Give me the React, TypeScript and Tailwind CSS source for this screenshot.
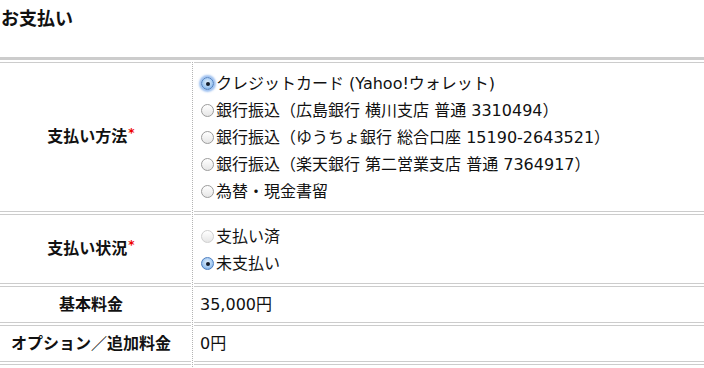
import React from "react"

type Option = { label: string; checked?: boolean; focused?: boolean; disabled?: boolean }

const methods: Option[] = [
  { label: "クレジットカード (Yahoo!ウォレット)", checked: true, focused: true },
  { label: "銀行振込（広島銀行 横川支店 普通 3310494）" },
  { label: "銀行振込（ゆうちょ銀行 総合口座 15190-2643521）" },
  { label: "銀行振込（楽天銀行 第二営業支店 普通 7364917）" },
  { label: "為替・現金書留" },
]

const statuses: Option[] = [
  { label: "支払い済", disabled: true },
  { label: "未支払い", checked: true },
]

function Radio({ checked, focused, disabled }: Option) {
  if (checked) {
    return (
      <span
        className={`ml-[1px] mr-[2px] flex h-[13px] w-[13px] shrink-0 items-center justify-center rounded-full border border-[#4f7fc0] bg-[radial-gradient(circle_at_50%_40%,#e4f0fc_0%,#a6cbf2_55%,#5f9ade_100%)] ${
          focused ? "shadow-[0_0_2px_2px_rgba(92,150,230,0.6)]" : ""
        }`}
      >
        <span className="h-[4px] w-[4px] rounded-full bg-[#141c2c]" />
      </span>
    )
  }
  return (
    <span
      className={`ml-[1px] mr-[2px] h-[13px] w-[13px] shrink-0 rounded-full border bg-gradient-to-b from-white to-[#e6e6e6] ${
        disabled ? "border-[#cfcfcf]" : "border-[#9c9c9c]"
      }`}
    />
  )
}

function Label({ text, required }: { text: string; required?: boolean }) {
  return (
    <div className="flex items-center justify-center border-y border-[#cccccc] pr-[9px] font-bold">
      <span>
        {text}
        {required && <span className="relative -top-[5px] ml-[1px] text-[12px] text-[#ee0000]">*</span>}
      </span>
    </div>
  )
}

function Options({ items, className }: { items: Option[]; className: string }) {
  return (
    <div className={`col-start-3 border-y border-[#cccccc] pl-[6px] ${className}`}>
      {items.map((o) => (
        <label key={o.label} className="flex h-[27px] items-center">
          <Radio {...o} />
          <span>{o.label}</span>
        </label>
      ))}
    </div>
  )
}

export default function App() {
  return (
    <div className="w-[704px] bg-white text-[16px] text-[#111] font-['DejaVu_Sans','Noto_Sans_CJK_JP',sans-serif]">
      <div className="h-[60px] border-b-[3px] border-[#cccccc] pl-[1px] pt-[7px]">
        <h2 className="text-[18px] font-bold leading-[24px]">お支払い</h2>
      </div>

      <div className="mt-[2px] grid grid-cols-[191px_3px_1fr] grid-rows-[150px_70px_37px_37px_37px] gap-y-[2px]">
        <div className="col-start-2 row-start-1 row-end-[-1] flex justify-center">
          <div className="h-full border-l border-dotted border-[#b4b4b4]" />
        </div>

        <div className="col-start-1 row-start-1 grid">
          <Label text="支払い方法" required />
        </div>
        <Options items={methods} className="row-start-1 pt-[7px] pb-[6px]" />

        <div className="col-start-1 row-start-2 grid">
          <Label text="支払い状況" required />
        </div>
        <Options items={statuses} className="row-start-2 pt-[8px] pb-[6px]" />

        <div className="col-start-1 row-start-3 grid">
          <Label text="基本料金" />
        </div>
        <div className="col-start-3 row-start-3 flex items-center border-y border-[#cccccc] pl-[6px]">35,000円</div>

        <div className="col-start-1 row-start-4 grid">
          <Label text="オプション／追加料金" />
        </div>
        <div className="col-start-3 row-start-4 flex items-center border-y border-[#cccccc] pl-[6px]">0円</div>

        <div className="col-start-1 row-start-5 border-y border-[#cccccc]" />
        <div className="col-start-3 row-start-5 border-y border-[#cccccc]" />
      </div>
    </div>
  )
}
